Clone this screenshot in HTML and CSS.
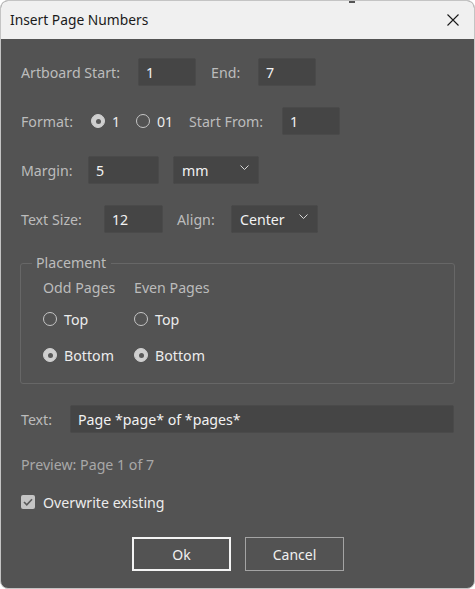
FILE: index.html
```html
<!DOCTYPE html>
<html>
<head>
<meta charset="utf-8">
<link rel="stylesheet" href="styles.css">
</head>
<body>
<div class="window">
  <span class="notch"></span>
  <div class="titlebar">
    <span class="title">Insert Page Numbers</span>
    <svg class="close" width="12" height="12" viewBox="0 0 12 12"><path d="M0.5 0.5 L11.5 11.5 M11.5 0.5 L0.5 11.5" stroke="#1a1a1a" stroke-width="1.1" fill="none"/></svg>
  </div>
  <div class="content">
    <div class="row r1">
      <span class="label l-start">Artboard Start:</span>
      <span class="field w58">1</span>
      <span class="label l-end">End:</span>
      <span class="field w58">7</span>
    </div>
    <div class="row r2">
      <span class="label l-format">Format:</span>
      <span class="radio on"></span><span class="opt o1">1</span>
      <span class="radio"></span><span class="opt o2">01</span>
      <span class="label l-from">Start From:</span>
      <span class="field w58">1</span>
    </div>
    <div class="row r3">
      <span class="label l-margin">Margin:</span>
      <span class="field w71">5</span>
      <span class="select w86">mm<svg class="chev" width="9" height="5" viewBox="0 0 9 5"><path d="M0.5 0.5 L4.5 4.5 L8.5 0.5" stroke="#d8d8d8" fill="none" stroke-width="1"/></svg></span>
    </div>
    <div class="row r4">
      <span class="label l-size">Text Size:</span>
      <span class="field w59">12</span>
      <span class="label l-align">Align:</span>
      <span class="select w87">Center<svg class="chev" width="9" height="5" viewBox="0 0 9 5"><path d="M0.5 0.5 L4.5 4.5 L8.5 0.5" stroke="#d8d8d8" fill="none" stroke-width="1"/></svg></span>
    </div>
    <fieldset class="placement">
      <legend>Placement</legend>
      <div class="cols">
        <div class="col">
          <div class="colhead">Odd Pages</div>
          <div class="ropt first"><span class="radio"></span><span class="opt">Top</span></div>
          <div class="ropt"><span class="radio on"></span><span class="opt">Bottom</span></div>
        </div>
        <div class="col">
          <div class="colhead">Even Pages</div>
          <div class="ropt first"><span class="radio"></span><span class="opt">Top</span></div>
          <div class="ropt"><span class="radio on"></span><span class="opt">Bottom</span></div>
        </div>
      </div>
    </fieldset>
    <div class="row r5">
      <span class="label l-text">Text:</span>
      <span class="field wide">Page *page* of *pages*</span>
    </div>
    <div class="preview">Preview: Page 1 of 7</div>
    <div class="check-row">
      <span class="checkbox"><svg width="10" height="8" viewBox="0 0 10 8"><path d="M1 4 L3.8 6.8 L9 1.2" stroke="#5a5a5a" stroke-width="1.6" fill="none"/></svg></span>
      <span class="opt">Overwrite existing</span>
    </div>
    <div class="buttons">
      <span class="btn ok">Ok</span>
      <span class="btn cancel">Cancel</span>
    </div>
  </div>
</div>
</body>
</html>
```

FILE: styles.css
```css
html, body {
  margin: 0;
  padding: 0;
  background: #ffffff;
}
body {
  width: 475px;
  height: 589px;
  overflow: hidden;
  font-family: "Noto Sans", "Open Sans", sans-serif;
}
.window {
  position: relative;
  width: 473px;
  height: 587px;
  border: 1px solid #c4c4c4;
  border-radius: 8px;
  overflow: hidden;
  background: #535353;
}
.notch {
  position: absolute;
  left: 348px;
  top: -1px;
  width: 6px;
  height: 3px;
  background: #555;
}
.titlebar {
  height: 38px;
  background: #f0f0f0;
  display: flex;
  align-items: center;
  justify-content: space-between;
  padding: 0 15px 0 9px;
}
.title {
  font-size: 13.8px;
  color: #1a1a1a;
  margin-top: -2px;
}
.content {
  padding: 19px 19px 0 20px;
  color: #c2c2c2;
  font-size: 14.2px;
}
.row {
  display: flex;
  align-items: center;
  height: 28px;
}
.r2, .r3, .r4 { margin-top: 21px; }
.label { color: #bcbcbc; }
.field, .select {
  box-sizing: border-box;
  height: 28px;
  background: #454545;
  border: 1px solid #4a4a4a;
  border-radius: 2px;
  color: #f2f2f2;
  display: flex;
  align-items: center;
  padding-left: 7px;
}
.select {
  justify-content: space-between;
  padding: 0 9px 0 8px;
}
.chev { margin-top: -6px; }
.w58 { width: 58px; }
.w59 { width: 59px; }
.w71 { width: 71px; }
.w86 { width: 86px; }
.w87 { width: 87px; }
.wide { width: 384px; }
.l-start { width: 117px; }
.l-end { margin-left: 15px; width: 47px; }
.l-format { width: 70px; }
.o1 { margin-left: 7px; width: 24px; }
.o2 { margin-left: 7px; width: 32px; }
.l-from { width: 93px; }
.l-margin { width: 67px; }
.w71 + .select { margin-left: 14px; }
.l-size { width: 83px; }
.l-align { margin-left: 14px; width: 54px; }
.l-text { width: 49px; }
.opt { color: #ececec; }
.radio {
  box-sizing: border-box;
  width: 14px;
  height: 14px;
  border-radius: 50%;
  border: 1px solid #c6c6c6;
  display: inline-flex;
  align-items: center;
  justify-content: center;
  flex: none;
}
.radio.on {
  background: #cfcfcf;
  border-color: #cfcfcf;
}
.radio.on::after {
  content: "";
  width: 5px;
  height: 5px;
  border-radius: 50%;
  background: #595959;
}
.placement {
  margin: 21px 0 0 -1px;
  padding: 0;
  height: 130px;
  box-sizing: border-box;
  width: 435px;
  border: 1px solid #676767;
  border-radius: 3px;
}
.placement legend {
  padding: 0 5px 0 4px;
  margin-left: 11px;
  color: #bcbcbc;
  font-size: 14.2px;
  line-height: 18px;
}
.cols {
  display: flex;
  margin-top: 6px;
  padding-left: 22px;
}
.col { width: 91px; }
.colhead {
  height: 20px;
  line-height: 20px;
  color: #bcbcbc;
}
.ropt {
  display: flex;
  align-items: center;
  gap: 7px;
  height: 20px;
  margin-top: 16px;
}
.ropt.first { margin-top: 11px; }
.r5 { margin-top: 21px; }
.preview {
  margin-top: 22px;
  color: #a8a8a8;
  height: 20px;
  line-height: 20px;
}
.check-row {
  display: flex;
  align-items: center;
  gap: 8px;
  margin-top: 17px;
  height: 20px;
}
.checkbox {
  box-sizing: border-box;
  width: 14px;
  height: 14px;
  border-radius: 2px;
  background: #c4c4c4;
  display: inline-flex;
  align-items: center;
  justify-content: center;
}
.buttons {
  display: flex;
  gap: 14px;
  margin: 25px 0 0 111px;
}
.btn {
  box-sizing: border-box;
  width: 99px;
  height: 34px;
  display: flex;
  align-items: center;
  justify-content: center;
  color: #f0f0f0;
  font-size: 14px;
}
.ok { border: 2px solid #f4f4f4; }
.cancel { border: 1px solid #a4a4a4; }
```
